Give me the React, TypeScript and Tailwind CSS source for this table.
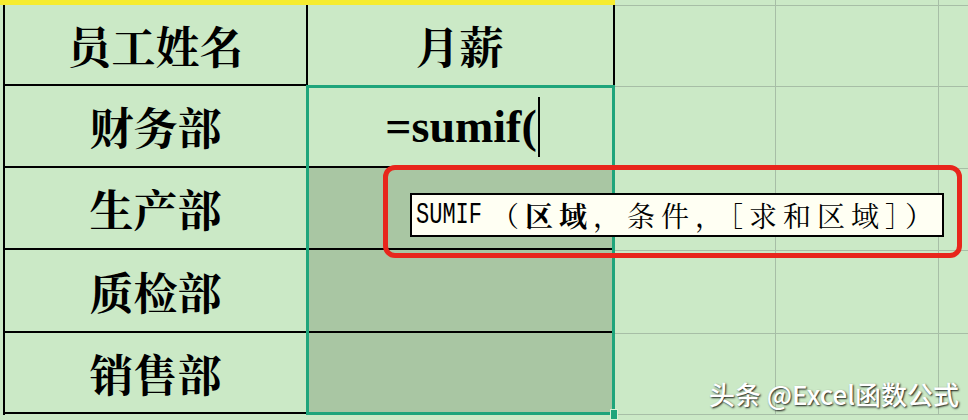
const cjk = "font-['Noto_Serif_CJK_SC','Noto_Sans_CJK_SC',sans-serif]";

const rows = [
  { name: "财务部", h: "h-[82px]" },
  { name: "生产部", h: "h-[82px]" },
  { name: "质检部", h: "h-[83px]" },
  { name: "销售部", h: "h-[81px]" },
];

const gridRows = ["h-[6px]", "h-[81px]", "h-[82px]", "h-[82px]", "h-[83px]", "h-[81px]"];

export default function App() {
  return (
    <div className="relative w-[968px] h-[420px] overflow-hidden bg-[#cbe9c6] flex">
      {/* table */}
      <div className="flex flex-col w-[615px] shrink-0">
        <div className="h-[5px] bg-[#f6ec2e]" />
        <div className="flex pl-[3px]">
          {/* column 1 */}
          <div className="flex flex-col w-[305px] border-l-2 border-r-2 border-black">
            <div className={`h-[81px] border-b-2 border-black flex items-center justify-center text-[44px] font-bold text-black ${cjk}`}>
              员工姓名
            </div>
            {rows.map((r) => (
              <div
                key={r.name}
                className={`${r.h} border-b-2 border-black flex items-center justify-center text-[44px] font-bold text-black ${cjk}`}
              >
                {r.name}
              </div>
            ))}
          </div>
          {/* column 2 */}
          <div className="flex flex-col flex-1 -ml-[2px]">
            <div className={`h-[80px] border-r-2 border-black flex items-center justify-center text-[44px] font-bold text-black ${cjk}`}>
              月薪
            </div>
            <div className="border-[3px] border-[#1fa57b] flex flex-col">
              <div className="h-[80px] border-b-2 border-black flex items-center justify-center pl-[4px]">
                <span className="font-['Liberation_Serif',serif] font-bold text-[46px] leading-none text-black">=sumif(</span>
                <span className="inline-block w-[2px] h-[60px] bg-black ml-[1px]" />
              </div>
              <div className="h-[82px] border-b-2 border-black bg-[#a9c6a3]" />
              <div className="h-[83px] border-b-2 border-black bg-[#a9c6a3]" />
              <div className="h-[79px] bg-[#a9c6a3]" />
            </div>
          </div>
        </div>
      </div>

      {/* plain sheet grid */}
      <div className="flex flex-col flex-1">
        {gridRows.map((h, i) => (
          <div key={i} className={`${h} flex border-b border-[#a7bea6]`}>
            <div className="w-[161px] border-r border-[#a7bea6]" />
            <div className="w-[163px] border-r border-[#a7bea6]" />
            <div className="flex-1" />
          </div>
        ))}
      </div>

      {/* fill handle */}
      <div className="absolute left-[610px] top-[409px] w-[8px] h-[11px] bg-[#1fa57b] border border-[#d9f2d6]" />

      {/* red highlight */}
      <div className="absolute left-[383px] top-[165px] w-[579px] h-[93px] border-[5px] border-[#e8261c] rounded-[12px]" />

      {/* function tooltip */}
      <div className="absolute left-[410px] top-[193px] w-[534px] h-[44px] bg-[#fffff3] border-2 border-black flex items-center pl-[4px] text-black">
        <span className="font-['Liberation_Mono',monospace] text-[22px] inline-block scale-y-[1.3] mr-[9px]">SUMIF</span>
        <span className={`${cjk} text-[28px] tracking-[6px] leading-none`}>
          （<b className="font-bold">区域</b>，条件，［求和区域］）
        </span>
      </div>

      {/* watermark */}
      <div className="absolute right-[9px] bottom-[7px] text-white text-[26px] font-medium font-['Noto_Sans_CJK_SC',sans-serif] [text-shadow:1px_1px_2px_rgba(0,0,0,0.9)]">
        头条 @Excel函数公式
      </div>
    </div>
  );
}
